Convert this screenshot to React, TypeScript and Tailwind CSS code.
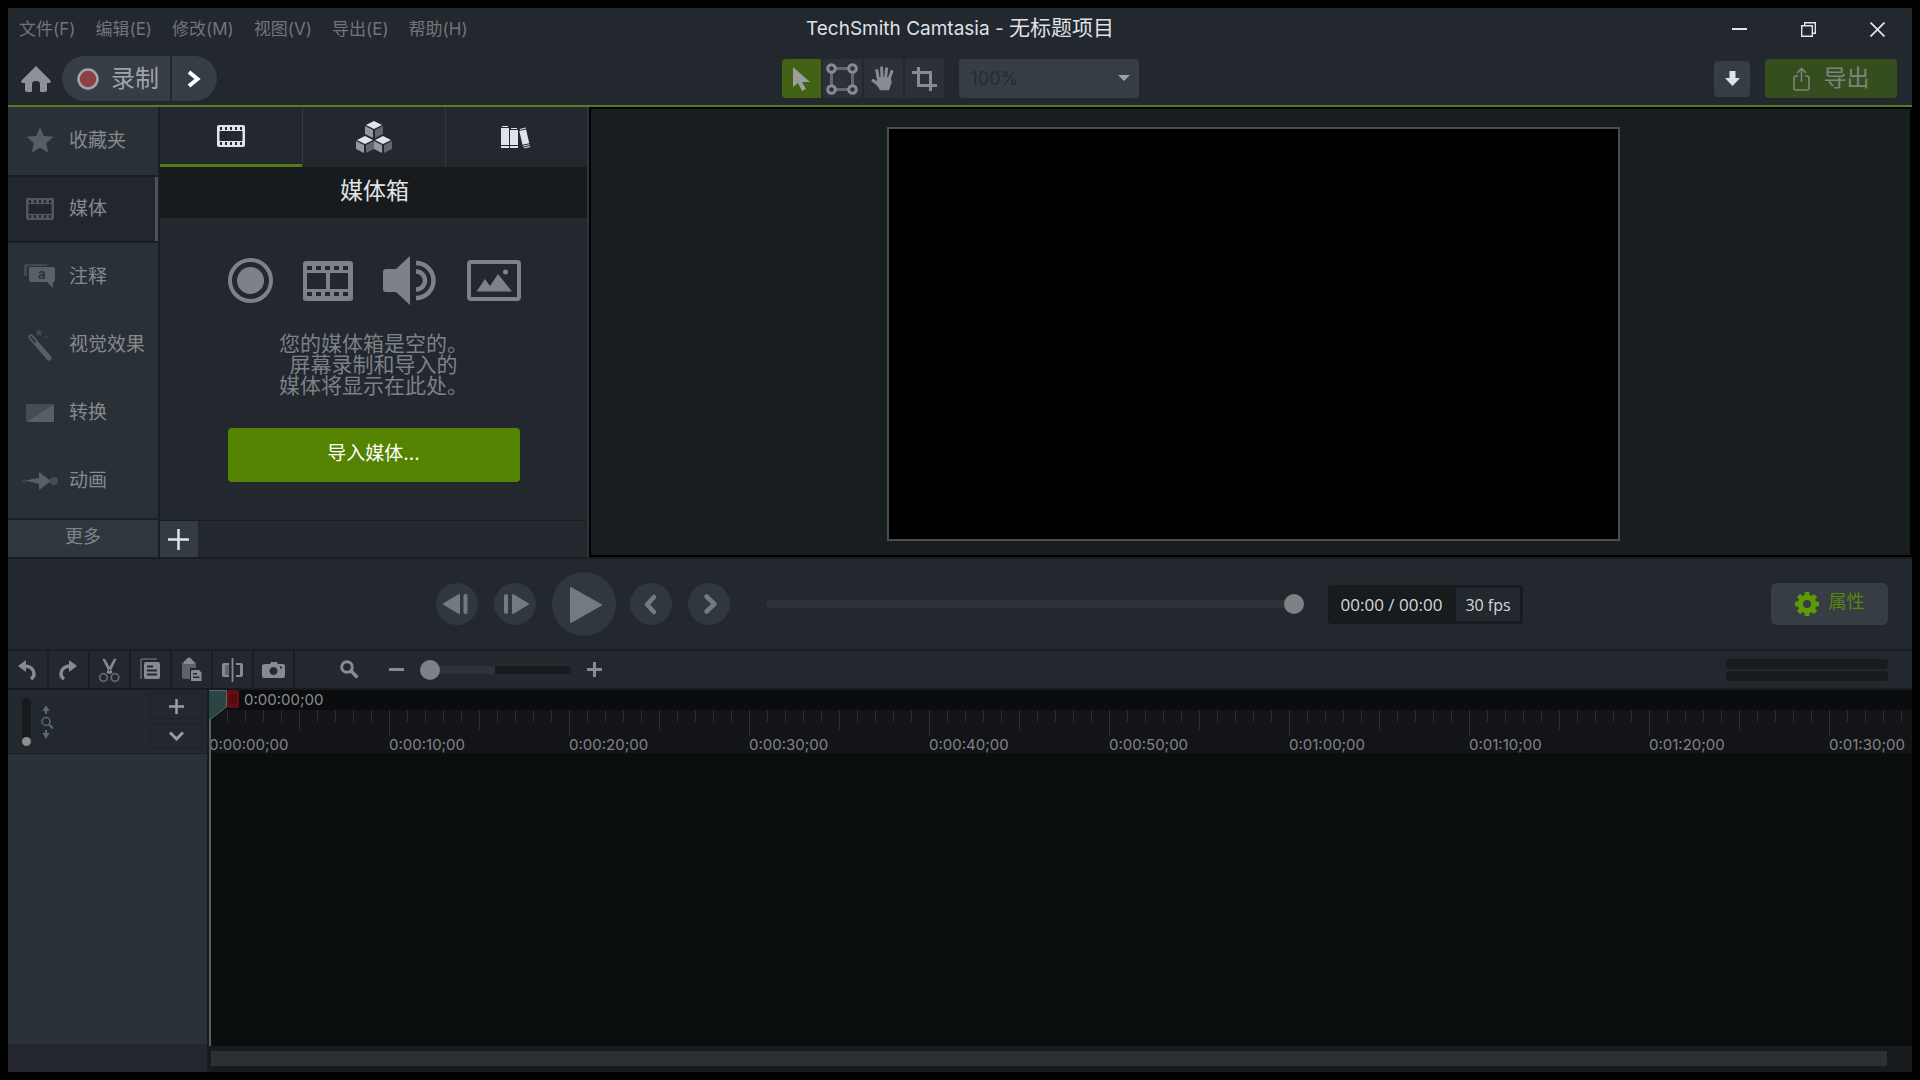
import React from "react";

type IconProps = { className?: string };

const holes = (xs: number[], y: number, w: number, h: number) =>
  xs.map((x) => `M${x} ${y}h${w}v${h}h-${w}z`).join("");

function FilmIcon({ className }: IconProps) {
  const xs = [3, 8, 13, 18, 23];
  return (
    <svg width="28" height="22" viewBox="0 0 28 22" fill="currentColor" fillRule="evenodd" className={className} aria-hidden="true">
      <path d={"M2 0h24a2 2 0 0 1 2 2v18a2 2 0 0 1-2 2H2a2 2 0 0 1-2-2V2a2 2 0 0 1 2-2zM2.500 6v10h23V6z" + holes(xs, 2, 2, 3) + holes(xs, 17, 2, 3)} />
    </svg>
  );
}

function CubesIcon() {
  const cube = (x: number, y: number) => (
    <g transform={`translate(${x} ${y})`}>
      <path d="M9 0l8 4-8 4-8-4z" fill="#dfe3ea" />
      <path d="M0 5l8 4v8l-8-4z" fill="#9297a0" />
      <path d="M18 5l-8 4v8l8-4z" fill="#62666f" />
    </g>
  );
  return (
    <svg width="36" height="33" viewBox="0 0 36 33" aria-hidden="true">
      {cube(9, 0)}
      {cube(0, 15)}
      {cube(18, 15)}
    </svg>
  );
}

function BooksIcon() {
  return (
    <svg width="31" height="23" viewBox="0 0 31 23" fill="#dfe3ea" aria-hidden="true">
      <path d="M1 0h6v1H1zM0 2h8v17H0zM0 20h8v2H0zM10 2h6v1h-6zM9 4h8v15H9zM9 20h8v2H9z" />
      <g transform="rotate(-13 24 12)">
        <path d="M21 2h6v1h-6zM20 4h7v14h-7zM20 19h7v1h-7zM21 21h6v1h-6z" />
      </g>
    </svg>
  );
}

function ToolButton({ label, active, children }: { label: string; active?: boolean; children: React.ReactNode }) {
  return (
    <button
      aria-label={label}
      className={
        active
          ? "flex h-[39px] w-[39px] items-center justify-center rounded-l bg-[#426315] text-[#9b9f9c]"
          : "flex h-[39px] w-[39px] items-center justify-center bg-[#2b3039] text-[#888c92]"
      }
    >
      {children}
    </button>
  );
}

const menus = ["文件(F)", "编辑(E)", "修改(M)", "视图(V)", "导出(E)", "帮助(H)"];

function Header() {
  return (
    <header className="border-b-2 border-[#587a24] bg-[#23272e]">
      <div className="grid h-11 grid-cols-[1fr_auto_1fr] items-center pb-[3px]">
        <nav className="flex gap-5 pl-[11px]">
          {menus.map((m) => (
            <button key={m} className="text-[17px] leading-6 whitespace-nowrap text-[#70757b]">
              {m}
            </button>
          ))}
        </nav>
        <h1 className="text-[19px] leading-6 text-[#dfe2e6]">
          TechSmith Camtasia - <span className="text-[21px]">无标题项目</span>
        </h1>
        <div className="flex justify-end gap-[54px] pt-0.5 pr-[27px] text-[#e2e5ea]">
          <button aria-label="最小化">
            <svg width="15" height="15" viewBox="0 0 15 15" stroke="currentColor" strokeWidth="2"><path d="M0 7h15" /></svg>
          </button>
          <button aria-label="还原">
            <svg width="15" height="15" viewBox="0 0 15 15" fill="none" stroke="currentColor" strokeWidth="1.4"><path d="M.7 3.7h10.6v10.6H.7zM3.7 3.7v-3h10.6v10.6h-3" /></svg>
          </button>
          <button aria-label="关闭">
            <svg width="15" height="15" viewBox="0 0 15 15" stroke="currentColor" strokeWidth="1.7"><path d="M.5.5l14 14M14.5.5l-14 14" /></svg>
          </button>
        </div>
      </div>
      <div className="grid h-[53px] grid-cols-[1fr_auto_1fr] items-center">
        <div className="flex items-center pl-[13px]">
          <button aria-label="主页" className="text-[#8e9196]">
            <svg width="30" height="26" viewBox="0 0 30 26" fill="currentColor"><path d="M15 0l14.500 14.500q1 2.500-1.500 2.500h-2v7q0 2-2 2h-4q-1 0-1-1v-7q0-3-4-3t-4 3v7q0 1-1 1H6q-2 0-2-2v-7H2q-2.500 0-1.500-2.500z" /></svg>
          </button>
          <div className="ml-[11px] flex h-[45px] gap-0.5">
            <button className="flex w-[108px] items-center gap-3 rounded-l-full bg-[#363d44] pl-[15px] text-2xl leading-none text-[#a0a4a8]">
              <svg width="22" height="22" viewBox="0 0 22 22" aria-hidden="true"><circle cx="11" cy="11" r="9.500" fill="#8e4144" stroke="#a3a6a9" strokeWidth="2.500" /></svg>
              录制
            </button>
            <button aria-label="录制选项" className="flex w-[45px] items-center rounded-r-full bg-[#363d44] pl-[15px] text-white">
              <svg width="14" height="18" viewBox="0 0 14 18" fill="none" stroke="currentColor" strokeWidth="4"><path d="M2 2l8.500 7L2 16" /></svg>
            </button>
          </div>
        </div>
        <div className="flex items-center gap-0.5">
          <ToolButton label="选择" active>
            <svg width="17" height="24" viewBox="0 0 17 24" fill="currentColor"><path d="M0 0v20l5-4 4 8 4-2-4-7h8z" /></svg>
          </ToolButton>
          <ToolButton label="编辑点">
            <svg width="32" height="32" viewBox="0 0 32 32" fill="none" stroke="currentColor" strokeWidth="3">
              <path d="M10 5.500h12M10 26.500h12M5.500 10v12M26.500 10v12" opacity=".6" />
              <circle cx="5.500" cy="5.500" r="3.800" /><circle cx="26.500" cy="5.500" r="3.800" /><circle cx="5.500" cy="26.500" r="3.800" /><circle cx="26.500" cy="26.500" r="3.800" />
            </svg>
          </ToolButton>
          <ToolButton label="平移">
            <svg width="24" height="25" viewBox="0 0 24 25" fill="currentColor" stroke="currentColor" strokeLinecap="round" strokeLinejoin="round">
              <path d="M7.500 14L5.800 4.500M11 12l-.4-10.300M14.600 12l1-9.300M17.800 14l3-8.500M7.500 18.500L2 14.500" strokeWidth="3" fill="none" />
              <path d="M7 12h11.500l1.500 4-2.500 7.500H9.500L6 18z" strokeWidth="1.500" />
            </svg>
          </ToolButton>
          <ToolButton label="裁剪">
            <svg width="25" height="24" viewBox="0 0 25 24" fill="none" stroke="currentColor" strokeWidth="3"><path d="M6.500 0v18.500H25M0 5.500h18.500V24" /></svg>
          </ToolButton>
          <div className="relative ml-[13px]">
            <select aria-label="缩放" defaultValue="100%" className="h-[39px] w-[180px] appearance-none rounded bg-[#363d44] pl-3 text-lg leading-6 text-[#272c32]">
              <option>100%</option>
            </select>
            <svg width="12" height="6" viewBox="0 0 12 6" fill="#9da0a5" className="pointer-events-none absolute top-4 right-[9px]"><path d="M0 0h12L6 6z" /></svg>
          </div>
        </div>
        <div className="flex items-center justify-end gap-[15px] pr-[15px]">
          <button aria-label="下载" className="flex h-9 w-9 items-center justify-center rounded-sm bg-[#363d45]">
            <svg width="15" height="15" viewBox="0 0 15 15" fill="#dfe3ea"><path d="M4.500 0h6v7H15l-7.500 8L0 7h4.500z" /></svg>
          </button>
          <button className="flex h-[39px] w-[132px] items-center justify-center gap-[14px] rounded bg-[#364e1d] text-[23px] leading-none text-[#7d8480]">
            <svg width="17" height="24" viewBox="0 0 17 24" fill="none" stroke="currentColor" strokeWidth="1.600" aria-hidden="true"><path d="M5 9H3Q1 9 1 11v10q0 2 2 2h11q2 0 2-2V11q0-2-2-2h-2M8.500 15V1.500M4 6l4.500-4.500L13 6" /></svg>
            导出
          </button>
        </div>
      </div>
    </header>
  );
}

const icons: Record<string, React.ReactNode> = {
  star: <svg width="28" height="28" viewBox="0 0 28 28" fill="#585d64"><path d="M14 0l3.800 9 9.700.8-7.300 6.400 2.200 9.500L14 20.700l-8.400 5 2.200-9.500L.5 9.800l9.700-.8z" /></svg>,
  film: <FilmIcon className="text-[#53575d]" />,
  note: (
    <svg width="32" height="26" viewBox="0 0 32 26">
      <path d="M0 12V2q0-2 2-2h20q2 0 2 2H5q-2 0-2 2v8z" fill="#42484e" />
      <path d="M7 3h22q2 0 2 2v11q0 2-2 2v6l-6-6H7q-2 0-2-2V5q0-2 2-2z" fill="#5b6067" />
      <text x="14" y="15" fontSize="13" fontWeight="700" fill="#2a3136" fontFamily="Inter">a</text>
    </svg>
  ),
  wand: (
    <svg width="26" height="32" viewBox="0 0 26 32">
      <path d="M4 8l18 21" stroke="#5a5f66" strokeWidth="5" strokeLinecap="round" />
      <path d="M4 8l4 5" stroke="#2a3136" strokeWidth="2" strokeLinecap="round" />
      <path d="M12 0l1 2.500 2.500.2-2 1.800.7 2.500-2.200-1.500L9.800 7l.7-2.500-2-1.800 2.500-.2z" fill="#474d53" />
      <circle cx="19" cy="8" r="1.500" fill="#3a4046" />
    </svg>
  ),
  swap: <svg width="28" height="18" viewBox="0 0 28 18"><rect width="28" height="18" rx="1.500" fill="#464c53" /><path d="M28 0v18H1z" fill="#5a5f66" /></svg>,
  move: (
    <svg width="36" height="18" viewBox="0 0 36 18">
      <circle cx="2" cy="9" r="2" fill="#3d4349" /><circle cx="32" cy="9" r="4" fill="#474d53" />
      <path d="M3 8.500L17 6V0l12 9-12 9v-6z" fill="#5a5f66" />
    </svg>
  ),
};

function SideItem({ icon, label }: { icon: string; label: string }) {
  return (
    <button className="flex h-[68px] w-full items-center text-[19px] leading-6 text-[#85898e]">
      <span className="flex w-16 shrink-0 justify-center">{icons[icon]}</span>
      <span className="-ml-[3px] whitespace-nowrap">{label}</span>
    </button>
  );
}

function Sidebar() {
  return (
    <aside className="flex w-[152px] shrink-0 flex-col border-r-2 border-[#1a1e21] bg-[#2a3136]">
      <SideItem icon="star" label="收藏夹" />
      <div className="flex h-[68px] items-center overflow-hidden border-y-2 border-[#1a1e21] bg-[#22262d]">
        <SideItem icon="film" label="媒体" />
        <div className="h-full w-[3px] shrink-0 bg-[#4b5157]" />
      </div>
      <SideItem icon="note" label="注释" />
      <SideItem icon="wand" label="视觉效果" />
      <SideItem icon="swap" label="转换" />
      <SideItem icon="move" label="动画" />
      <button className="mt-[3px] flex flex-1 items-center justify-center border-t-2 border-[#1d2125] bg-[#30363e] pb-1 text-lg leading-6 text-[#7f848a]">更多</button>
    </aside>
  );
}

function EmptyBinIcons() {
  const xs = [4, 13, 22, 31, 40];
  return (
    <div className="flex items-center gap-[30px] pl-0.5 text-[#7e8189]">
      <svg width="45" height="45" viewBox="0 0 45 45"><circle cx="22.500" cy="22.500" r="20.500" fill="none" stroke="currentColor" strokeWidth="4" /><circle cx="22.500" cy="22.500" r="13.500" fill="currentColor" /></svg>
      <svg width="50" height="40" viewBox="0 0 50 40" fill="currentColor" fillRule="evenodd">
        <path d={"M3 0h44q3 0 3 3v34q0 3-3 3H3q-3 0-3-3V3q0-3 3-3zM4 12v16h19V12zM27 12v16h18V12z" + holes(xs, 5, 5, 4) + holes(xs, 31, 5, 4)} />
      </svg>
      <svg width="54" height="49" viewBox="0 0 54 49" fill="currentColor">
        <path d="M3 13h10L27 0v49L13 36H3q-3 0-3-3V16q0-3 3-3z" />
        <path d="M33 7a17.500 17.500 0 0 1 0 35M33 15.500a9 9 0 0 1 0 18" fill="none" stroke="currentColor" strokeWidth="4.500" />
      </svg>
      <svg width="54" height="41" viewBox="0 0 54 41" fill="currentColor">
        <rect x="2" y="2" width="50" height="37" rx="2" fill="none" stroke="currentColor" strokeWidth="4" />
        <path d="M9.500 31.500L18 19l5 7 8-12 14 17.500z" /><circle cx="38.500" cy="12" r="2.500" />
      </svg>
    </div>
  );
}

function MediaPanel() {
  return (
    <section className="flex w-[429px] shrink-0 flex-col border-r-2 border-[#2f353b] bg-[#23272e]">
      <div role="tablist" className="grid h-[60px] grid-cols-[142px_144px_1fr]">
        <button role="tab" aria-selected="true" aria-label="媒体箱" className="flex items-center justify-center border-b-[3px] border-[#567b12] text-[#dfe3ea]"><FilmIcon /></button>
        <button role="tab" aria-selected="false" aria-label="资产" className="flex items-center justify-center border-x border-[#33383f]"><CubesIcon /></button>
        <button role="tab" aria-selected="false" aria-label="库" className="flex items-center justify-center"><BooksIcon /></button>
      </div>
      <h2 className="bg-[#171b1d] pt-[9px] pb-3 pl-0.5 text-center text-[23px] leading-[30px] text-[#e2e5e8]">媒体箱</h2>
      <div className="flex flex-1 flex-col items-center pt-[38px]">
        <EmptyBinIcons />
        <p className="mt-7 text-center text-[21px] leading-[21px] text-[#7c8087]">
          您的媒体箱是空的。
          <br />
          屏幕录制和导入的
          <br />
          媒体将显示在此处。
        </p>
        <button className="mt-8 h-[54px] w-[292px] rounded bg-[#538300] pb-0.5 text-[19px] leading-6 text-white">导入媒体...</button>
      </div>
      <div className="flex h-[37px] border-t border-[#1a1e21]">
        <button aria-label="添加" className="flex w-[38px] items-center justify-center bg-[#353b43] pr-px">
          <svg width="21" height="21" viewBox="0 0 21 21" stroke="#dfe3ea" strokeWidth="2.500"><path d="M10.500 0v21M0 10.500h21" /></svg>
        </button>
      </div>
    </section>
  );
}

function Preview() {
  return (
    <main className="flex min-w-0 flex-1 justify-center border-2 border-black bg-[#181d1f] pt-[18px] pb-3.5 pl-1.5">
      <div className="h-[414px] w-[733px] border-2 border-[#4a4c4d] bg-black" />
    </main>
  );
}

function RoundButton({ label, children }: { label: string; children: React.ReactNode }) {
  return (
    <button aria-label={label} className="h-[42px] w-[42px] rounded-full bg-[#31373f] text-[#747a82]">
      <svg width="42" height="42" viewBox="0 0 42 42" fill="currentColor" stroke="currentColor" strokeLinejoin="round" strokeLinecap="round">{children}</svg>
    </button>
  );
}

function Playback() {
  return (
    <section className="flex h-[94px] items-center border-y-2 border-[#1a1e20] bg-[#23272e] pr-6 pl-[428px]">
      <div className="flex items-center gap-4">
        <RoundButton label="上一帧"><path d="M8 21l15-9v18z" strokeWidth="2" /><path d="M29.500 13v16" strokeWidth="4" /></RoundButton>
        <RoundButton label="下一帧"><path d="M19 12v18l15-9z" strokeWidth="2" /><path d="M12 13v16" strokeWidth="4" /></RoundButton>
        <button aria-label="播放" className="h-16 w-16 rounded-full bg-[#31373f] text-[#747a82]">
          <svg width="64" height="64" viewBox="0 0 64 64" fill="currentColor" stroke="currentColor" strokeWidth="2" strokeLinejoin="round"><path d="M19 16v34l30-17z" /></svg>
        </button>
        <div className="-ml-0.5 flex gap-4">
          <RoundButton label="后退"><path d="M24 14l-7 7.500 7 7.500" fill="none" strokeWidth="4.500" /></RoundButton>
          <RoundButton label="前进"><path d="M18.500 13.500l8 7.500-8 7.500" fill="none" strokeWidth="4.500" /></RoundButton>
        </div>
      </div>
      <input
        type="range"
        aria-label="播放位置"
        defaultValue={100}
        className="ml-9 h-2 min-w-0 flex-1 appearance-none rounded-full bg-[#2f3337] [&::-webkit-slider-thumb]:h-5 [&::-webkit-slider-thumb]:w-5 [&::-webkit-slider-thumb]:appearance-none [&::-webkit-slider-thumb]:rounded-full [&::-webkit-slider-thumb]:bg-[#7d8185]"
      />
      <div className="ml-6 flex h-[39px] items-center rounded bg-[#171b1d] p-[3px] font-['Open_Sans',sans-serif] leading-6 text-[#d5d8dc]">
        <span className="w-[125px] pt-0.5 pr-1 text-center text-[17px] whitespace-nowrap">00:00 / 00:00</span>
        <span className="flex h-[33px] w-16 items-center justify-center bg-[#23272e] pt-0.5 text-base whitespace-nowrap">30 fps</span>
      </div>
      <button className="ml-[248px] flex h-[42px] w-[117px] items-center justify-center gap-2.5 rounded-md bg-[#363d43] text-lg leading-6 text-[#568711]">
        <svg width="24" height="24" viewBox="0 0 24 24" aria-hidden="true">
          <g fill="#5e9a06">
            {[0, 45, 90, 135].map((a) => (
              <rect key={a} x="9.500" y="0" width="5" height="24" rx="1" transform={`rotate(${a} 12 12)`} />
            ))}
            <circle cx="12" cy="12" r="9.300" />
          </g>
          <circle cx="12" cy="12" r="4" fill="#363d43" />
        </svg>
        <span className="pb-1">属性</span>
      </button>
    </section>
  );
}

const editTools: { label: string; icon: React.ReactNode }[] = [
  { label: "撤销", icon: <><path d="M1 6l8-6v12z" fill="currentColor" /><path d="M7 6c7 0 10 4 10 8q0 3-3 5" fill="none" strokeWidth="3.500" stroke="currentColor" /></> },
  { label: "重做", icon: <><path d="M19 6l-8-6v12z" fill="currentColor" /><path d="M13 6C6 6 3 10 3 14q0 3 3 5" fill="none" strokeWidth="3.500" stroke="currentColor" /></> },
  { label: "剪切", icon: <><path d="M4-1l2 .5 7 13-2 1zM17-1l-2 .5-7 13 2 1z" fill="currentColor" stroke="currentColor" /><g fill="none" stroke="#62666d" strokeWidth="1.800"><circle cx="4.500" cy="17.500" r="3.800" /><circle cx="16" cy="17.500" r="3.800" /></g></> },
  { label: "复制", icon: <><path d="M1 19V1q0-2 2-2h14" fill="none" stroke="#62666d" strokeWidth="1.600" /><path fillRule="evenodd" d="M6 2h12q2 0 2 2v13q0 2-2 2H6q-2 0-2-2V4q0-2 2-2zM7 5.500v2h6v-2zM7 9.500v2h10v-2zM7 13.500v2h10v-2z" fill="currentColor" /></> },
  { label: "粘贴", icon: <><path d="M1 2h14v6H9v11H3q-2 0-2-2z" fill="#5d6168" /><path d="M3 4V2q0-1.500 2-2 .5-2.500 3-2.500T11 0q2 .5 2 2v2z" fill="currentColor" /><path fillRule="evenodd" d="M11 10h7l2.500 2.500V21H10V11zM12 13v1.500h4V13zM12 16.500V18h6.500v-1.500z" fill="currentColor" /></> },
  { label: "拆分", icon: <><path d="M10.500-2v24" stroke="currentColor" strokeWidth="1.800" /><path d="M7 3H2q-2 0-2 2v10q0 2 2 2h5v-2H3V5h4zM14 3h5q2 0 2 2v10q0 2-2 2h-5v-2h4V5h-4z" fill="currentColor" /><path d="M3 5h4v10H3z" fill="#62666d" /></> },
  { label: "快照", icon: <path fillRule="evenodd" d="M2 4h5l1-2h6l1 2h5q2 0 2 2v10q0 2-2 2H1q-2 0-2-2V6q0-2 3-2zM10.500 7a4 4 0 1 0 .01 0zM17 6.500v2h2v-2z" fill="currentColor" /> },
];

function TimelineToolbar() {
  return (
    <div className="flex h-[37px] items-stretch bg-[#23272e] text-[#868a91]">
      {editTools.map((t) => (
        <button key={t.label} aria-label={t.label} className="flex w-[41px] items-center justify-center border-r-2 border-[#1a1e21]">
          <svg width="21" height="20" viewBox="0 0 21 20" className="overflow-visible">{t.icon}</svg>
        </button>
      ))}
      <div className="flex flex-1 items-center pr-6 pl-[45px]">
        <svg width="19" height="19" viewBox="0 0 19 19" fill="none" stroke="currentColor" strokeWidth="3" aria-hidden="true"><circle cx="7" cy="7" r="5.300" /><path d="M11 11l6.500 6.500" strokeWidth="3.500" /></svg>
        <button aria-label="缩小" className="ml-[30px]"><svg width="15" height="15" viewBox="0 0 15 15" stroke="currentColor" strokeWidth="3"><path d="M0 7.500h15" /></svg></button>
        <input
          type="range"
          aria-label="时间轴缩放"
          defaultValue={0}
          className="ml-4 h-2 w-[151px] appearance-none rounded-full bg-[linear-gradient(90deg,#2f3337_50%,#171b1d_50%)] [&::-webkit-slider-thumb]:h-5 [&::-webkit-slider-thumb]:w-5 [&::-webkit-slider-thumb]:appearance-none [&::-webkit-slider-thumb]:rounded-full [&::-webkit-slider-thumb]:bg-[#7d8185]"
        />
        <button aria-label="放大" className="ml-4"><svg width="15" height="15" viewBox="0 0 15 15" stroke="currentColor" strokeWidth="3"><path d="M0 7.500h15M7.500 0v15" /></svg></button>
        <div className="ml-auto flex flex-col gap-0.5">
          <div className="h-2.5 w-[162px] rounded bg-[#171b1d]" />
          <div className="h-2.5 w-[162px] rounded bg-[#171b1d]" />
        </div>
      </div>
    </div>
  );
}

const marks = ["0:00:00;00", "0:00:10;00", "0:00:20;00", "0:00:30;00", "0:00:40;00", "0:00:50;00", "0:01:00;00", "0:01:10;00", "0:01:20;00", "0:01:30;00"];

function Timeline() {
  return (
    <section className="flex min-h-0 flex-1 border-t-2 border-[#171b1d] bg-[#171b1d]">
      <div className="flex w-[199px] shrink-0 flex-col">
        <div className="flex h-16 items-start justify-between border-b border-[#1a1e21] bg-[#23272e] pt-[3px] pr-1 pl-3.5">
          <div className="flex items-center gap-2.5 pt-[5px]">
            <input
              type="range"
              aria-label="轨道高度"
              defaultValue={0}
              className="h-12 w-[9px] appearance-none rounded-full bg-[#171b1d] [direction:rtl] [writing-mode:vertical-lr] [&::-webkit-slider-thumb]:h-[9px] [&::-webkit-slider-thumb]:w-[9px] [&::-webkit-slider-thumb]:appearance-none [&::-webkit-slider-thumb]:rounded-full [&::-webkit-slider-thumb]:bg-[#8b8f92]"
            />
            <svg width="12" height="34" viewBox="0 0 12 34" fill="#5a6a6d" aria-hidden="true">
              <path d="M5 0l3.500 6H6v3H4V6H1.500zM5 34l3.500-6H6v-3H4v3H1.500z" />
              <path d="M8 19.500l4 4" stroke="#5a6a6d" strokeWidth="2" /><circle cx="5" cy="16.500" r="4" fill="none" stroke="#5a6a6d" strokeWidth="1.500" />
            </svg>
          </div>
          <div className="flex flex-col gap-1 text-[#9a9da2]">
            <button aria-label="添加轨道" className="flex h-[26px] w-[53px] items-center justify-center rounded-sm border border-[#1e2227]">
              <svg width="15" height="15" viewBox="0 0 15 15" stroke="currentColor" strokeWidth="2.500"><path d="M0 7.500h15M7.500 0v15" /></svg>
            </button>
            <button aria-label="轨道选项" className="flex h-[26px] w-[53px] items-center justify-center rounded-sm border border-[#1e2227]">
              <svg width="15" height="10" viewBox="0 0 15 10" fill="none" stroke="currentColor" strokeWidth="3"><path d="M1 1.500l6.500 6.500L14 1.500" /></svg>
            </button>
          </div>
        </div>
        <div className="flex-1 bg-[#2b3138]" />
        <div className="h-7 bg-[#23262e]" />
      </div>
      <div className="flex min-w-0 flex-1 flex-col pl-0.5">
        <div className="relative flex min-h-0 flex-1 flex-col overflow-hidden bg-[#0a0e0f] text-[15px] text-[#808386]">
          <div className="h-[20px] bg-[#0b0c0e] pl-[35px] leading-5 text-[#8a8c8f]">0:00:00;00</div>
          <div className="flex h-[43px] bg-[#131417]">
            {marks.map((m) => (
              <div key={m} className="w-[180px] shrink-0">
                <div className="flex h-[26px] items-start">
                  {Array.from({ length: 10 }, (_, i) => (
                    <div
                      key={i}
                      className={
                        i === 0
                          ? "h-[26px] w-[18px] border-l border-[#303235]"
                          : i === 5
                            ? "h-5 w-[18px] border-l border-[#2c2e31]"
                            : "h-3 w-[18px] border-l border-[#2a2c2f]"
                      }
                    />
                  ))}
                </div>
                <div className="leading-[18px]">{m}</div>
              </div>
            ))}
          </div>
          <div className="absolute inset-y-0 left-0 w-0.5 bg-[#56605f]" />
          <svg width="31" height="30" viewBox="0 0 31 30" className="absolute top-0 left-0" aria-hidden="true">
            <path d="M0 0h18v17L1 29.500 0 29z" fill="#2d4445" /><path d="M0 .5h17.500V17L1 29.500" fill="none" stroke="#52686a" />
            <rect x="18" width="12" height="18" rx="1.500" fill="#640e11" /><path d="M21.500 4v10M24 4v10M26.500 4v10" stroke="#430809" />
          </svg>
        </div>
        <div className="h-[26px] pt-[5px] pr-[25px] pl-0.5">
          <div className="h-[15px] bg-[#2b2f36]" />
        </div>
      </div>
    </section>
  );
}

export default function App() {
  return (
    <div className="flex h-screen w-full flex-col bg-black p-2 font-['Inter','Noto_Sans_CJK_SC',sans-serif]">
      <Header />
      <div className="flex h-[450px] shrink-0">
        <Sidebar />
        <MediaPanel />
        <Preview />
      </div>
      <Playback />
      <TimelineToolbar />
      <Timeline />
    </div>
  );
}
